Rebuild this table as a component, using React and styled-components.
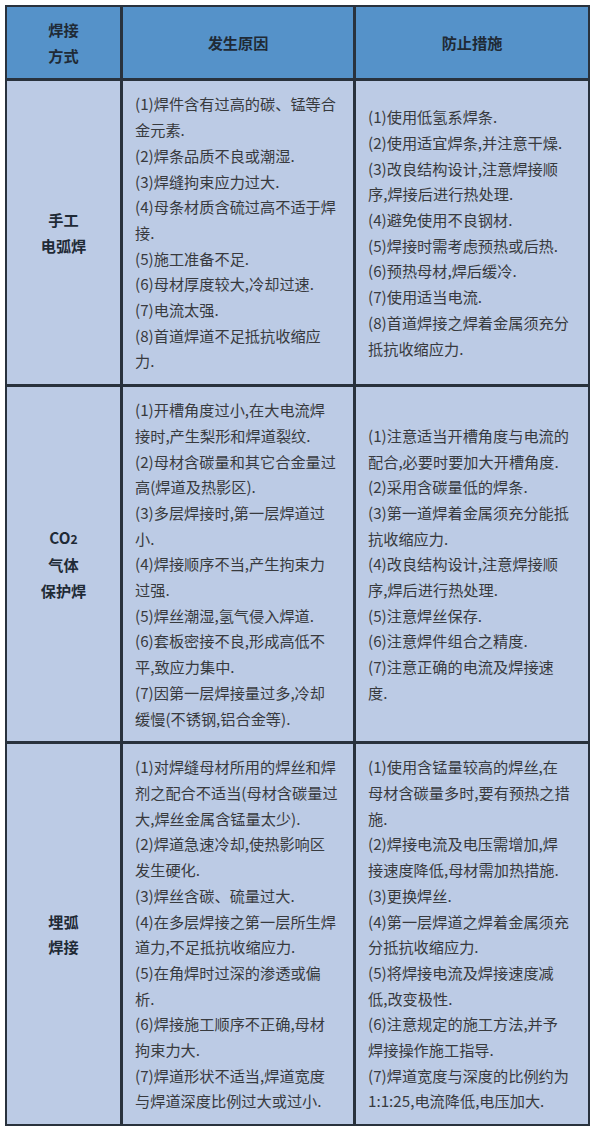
import styled, { createGlobalStyle } from "styled-components";

const rows = [
  {
    method: ["手工", "电弧焊"],
    causes: [
      "(1)焊件含有过高的碳、锰等合",
      "金元素.",
      "(2)焊条品质不良或潮湿.",
      "(3)焊缝拘束应力过大.",
      "(4)母条材质含硫过高不适于焊",
      "接.",
      "(5)施工准备不足.",
      "(6)母材厚度较大,冷却过速.",
      "(7)电流太强.",
      "(8)首道焊道不足抵抗收缩应",
      "力.",
    ],
    fixes: [
      "(1)使用低氢系焊条.",
      "(2)使用适宜焊条,并注意干燥.",
      "(3)改良结构设计,注意焊接顺",
      "序,焊接后进行热处理.",
      "(4)避免使用不良钢材.",
      "(5)焊接时需考虑预热或后热.",
      "(6)预热母材,焊后缓冷.",
      "(7)使用适当电流.",
      "(8)首道焊接之焊着金属须充分",
      "抵抗收缩应力.",
    ],
  },
  {
    method: ["CO2", "气体", "保护焊"],
    causes: [
      "(1)开槽角度过小,在大电流焊",
      "接时,产生梨形和焊道裂纹.",
      "(2)母材含碳量和其它合金量过",
      "高(焊道及热影区).",
      "(3)多层焊接时,第一层焊道过",
      "小.",
      "(4)焊接顺序不当,产生拘束力",
      "过强.",
      "(5)焊丝潮湿,氢气侵入焊道.",
      "(6)套板密接不良,形成高低不",
      "平,致应力集中.",
      "(7)因第一层焊接量过多,冷却",
      "缓慢(不锈钢,铝合金等).",
    ],
    fixes: [
      "(1)注意适当开槽角度与电流的",
      "配合,必要时要加大开槽角度.",
      "(2)采用含碳量低的焊条.",
      "(3)第一道焊着金属须充分能抵",
      "抗收缩应力.",
      "(4)改良结构设计,注意焊接顺",
      "序,焊后进行热处理.",
      "(5)注意焊丝保存.",
      "(6)注意焊件组合之精度.",
      "(7)注意正确的电流及焊接速",
      "度.",
    ],
  },
  {
    method: ["埋弧", "焊接"],
    causes: [
      "(1)对焊缝母材所用的焊丝和焊",
      "剂之配合不适当(母材含碳量过",
      "大,焊丝金属含锰量太少).",
      "(2)焊道急速冷却,使热影响区",
      "发生硬化.",
      "(3)焊丝含碳、硫量过大.",
      "(4)在多层焊接之第一层所生焊",
      "道力,不足抵抗收缩应力.",
      "(5)在角焊时过深的渗透或偏",
      "析.",
      "(6)焊接施工顺序不正确,母材",
      "拘束力大.",
      "(7)焊道形状不适当,焊道宽度",
      "与焊道深度比例过大或过小.",
    ],
    fixes: [
      "(1)使用含锰量较高的焊丝,在",
      "母材含碳量多时,要有预热之措",
      "施.",
      "(2)焊接电流及电压需增加,焊",
      "接速度降低,母材需加热措施.",
      "(3)更换焊丝.",
      "(4)第一层焊道之焊着金属须充",
      "分抵抗收缩应力.",
      "(5)将焊接电流及焊接速度减",
      "低,改变极性.",
      "(6)注意规定的施工方法,并予",
      "焊接操作施工指导.",
      "(7)焊道宽度与深度的比例约为",
      "1:1:25,电流降低,电压加大.",
    ],
  },
];

function MethodLine({ text }) {
  if (text === "CO2") {
    return (
      <Line>
        CO<Sub>2</Sub>
      </Line>
    );
  }
  return <Line>{text}</Line>;
}

export default function App() {
  return (
    <>
      <GlobalStyle />
      <Table>
        <HeadCell>
          <Line>焊接</Line>
          <Line>方式</Line>
        </HeadCell>
        <HeadCell>
          <Line>发生原因</Line>
        </HeadCell>
        <HeadCell>
          <Line>防止措施</Line>
        </HeadCell>
        {rows.map((row) => (
          <Row key={row.method.join("")}>
            <MethodCell>
              {row.method.map((m) => (
                <MethodLine key={m} text={m} />
              ))}
            </MethodCell>
            <TextCell>
              {row.causes.map((l, i) => (
                <Line key={i}>{l}</Line>
              ))}
            </TextCell>
            <TextCell>
              {row.fixes.map((l, i) => (
                <Line key={i}>{l}</Line>
              ))}
            </TextCell>
          </Row>
        ))}
      </Table>
    </>
  );
}

const GlobalStyle = createGlobalStyle`
  body {
    margin: 0;
    background: #fff;
    font-family: "Noto Sans CJK SC", "Noto Sans", sans-serif;
  }
`;

const Table = styled.div`
  display: grid;
  grid-template-columns: 113px 230px 232px;
  gap: 3px;
  width: 581px;
  margin: 5px;
  border: 2px solid #29323d;
  background: #29323d;
  font-size: 15.2px;
  line-height: 25.7px;
`;

const Row = styled.div`
  display: contents;
`;

const Cell = styled.div`
  display: flex;
  flex-direction: column;
  justify-content: center;
  padding: 10px 12px;
`;

const HeadCell = styled(Cell)`
  background: #5592c9;
  align-items: center;
  font-weight: bold;
  color: #1f2a36;
`;

const MethodCell = styled(Cell)`
  background: #bccbe5;
  align-items: center;
  font-weight: bold;
  color: #1f2a36;
`;

const TextCell = styled(Cell)`
  background: #bccbe5;
  color: #383a3e;
`;

const Line = styled.div`
  white-space: nowrap;
`;

const Sub = styled.span`
  font-size: 0.8em;
`;
